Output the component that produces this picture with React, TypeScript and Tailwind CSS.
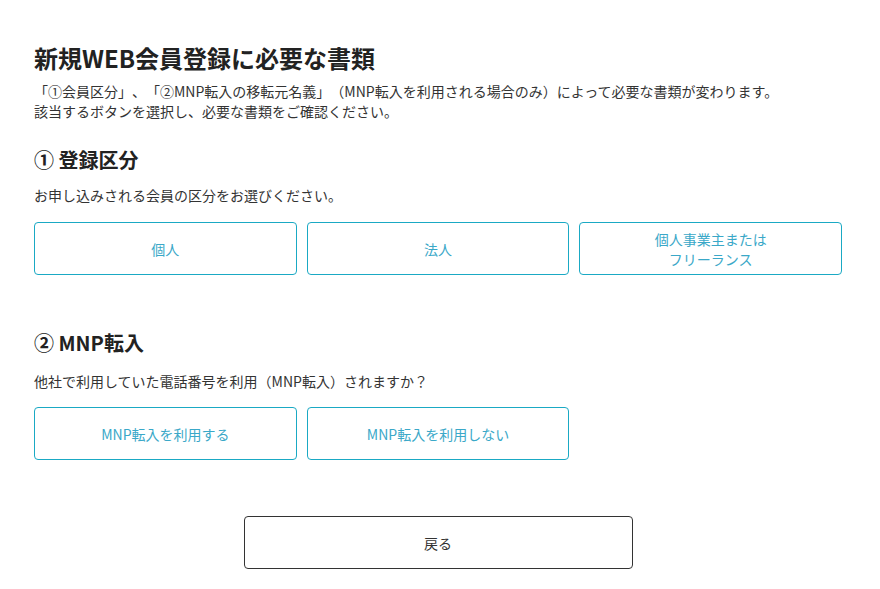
export default function App() {
  const font = {
    fontFamily: '"Noto Sans CJK JP", "Noto Sans", sans-serif',
    textSpacingTrim: 'space-all',
  } as React.CSSProperties;

  return (
    <div className="min-h-[589px] bg-white text-[#333]" style={font}>
      <div className="w-[808px] ml-[34px] pt-[42px]">
        <h1 className="text-[24px] leading-[32px] font-bold text-[#222]">新規WEB会員登録に必要な書類</h1>
        <p className="mt-[7px] text-[14px] leading-[20px]">
          「①会員区分」、「②MNP転入の移転元名義」（MNP転入を利用される場合のみ）によって必要な書類が変わります。
          <br />
          該当するボタンを選択し、必要な書類をご確認ください。
        </p>

        {/* 1 */}
        <h2 className="mt-[25px] text-[20px] leading-[28px] font-bold text-[#222]">① 登録区分</h2>
        <p className="mt-[11px] text-[14px] leading-[20px]">お申し込みされる会員の区分をお選びください。</p>
        <div className="mt-[17px] grid grid-cols-3 gap-[10px]">
          <button className="h-[53px] rounded-[4px] border border-[#1aa9c4] text-[14px] leading-[20px] text-[#3aa8c8]">個人</button>
          <button className="h-[53px] rounded-[4px] border border-[#1aa9c4] text-[14px] leading-[20px] text-[#3aa8c8]">法人</button>
          <button className="h-[53px] rounded-[4px] border border-[#1aa9c4] text-[14px] leading-[20px] text-[#3aa8c8]">
            個人事業主または
            <br />
            フリーランス
          </button>
        </div>

        {/* 2 */}
        <h2 className="mt-[54px] text-[20px] leading-[28px] font-bold text-[#222]">② MNP転入</h2>
        <p className="mt-[14px] text-[14px] leading-[20px]">他社で利用していた電話番号を利用（MNP転入）されますか？</p>
        <div className="mt-[16px] grid grid-cols-3 gap-[10px]">
          <button className="h-[53px] rounded-[4px] border border-[#1aa9c4] text-[14px] leading-[20px] text-[#3aa8c8]">MNP転入を利用する</button>
          <button className="h-[53px] rounded-[4px] border border-[#1aa9c4] text-[14px] leading-[20px] text-[#3aa8c8]">MNP転入を利用しない</button>
        </div>

        <div className="mt-[56px] flex justify-center">
          <button className="w-[389px] h-[53px] rounded-[4px] border border-[#333] text-[14px] leading-[20px] text-[#333]">戻る</button>
        </div>
      </div>
    </div>
  );
}
